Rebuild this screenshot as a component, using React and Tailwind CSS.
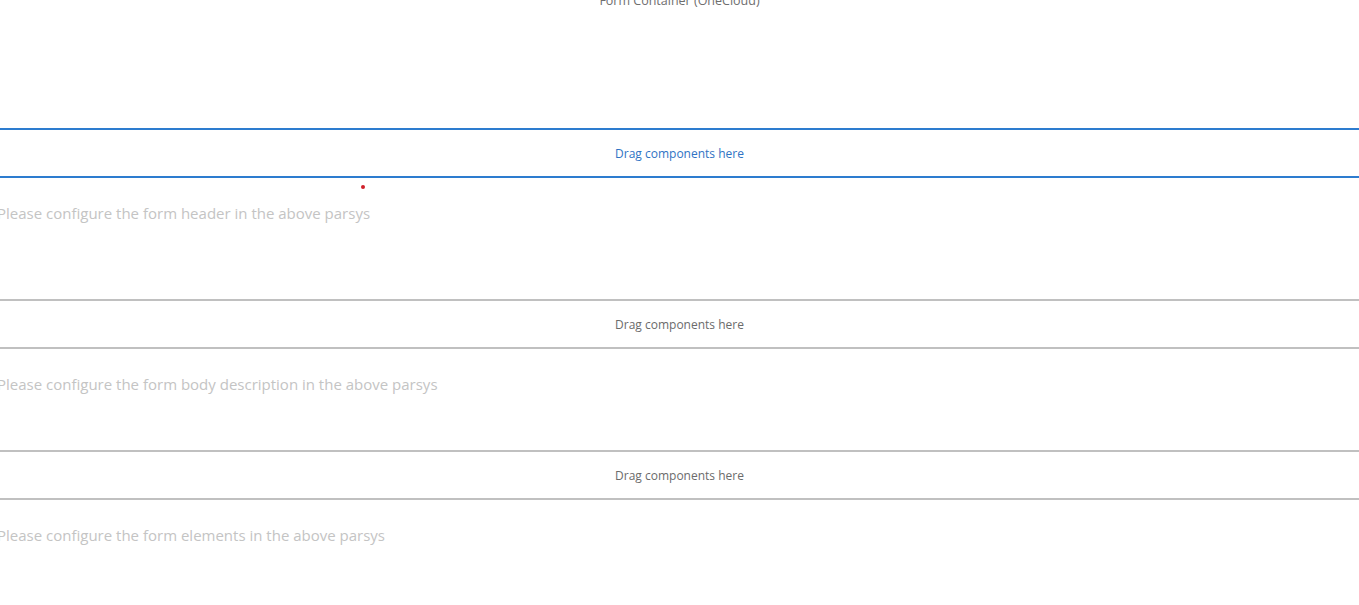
import React from 'react';

const font = { fontFamily: '"Open Sans", "Noto Sans", sans-serif' };

const DropZone = ({ active }) => (
  <div
    className={`h-[50px] border-y-2 flex items-center justify-center pt-[2px] text-[12px] ${
      active ? 'border-[#2d7ccf] text-[#2f73c4]' : 'border-[#c0c0c0] text-[#6b6b6b]'
    }`}
  >
    Drag components here
  </div>
);

const Placeholder = ({ text, height, children }) => (
  <div className={`relative ${height} pt-[25px]`}>
    {children}
    <p className="-ml-[3px] text-[15px] leading-[20px] text-[#c4c4c4]">{text}</p>
  </div>
);

export default function App() {
  return (
    <div className="w-full h-[605px] overflow-hidden bg-white" style={font}>
      {/* container title, scrolled partly off the top */}
      <div className="h-[128px] flow-root">
        <p className="-mt-[8px] text-center text-[12.5px] leading-[18px] text-[#6e6e6e]">
          Form Container (OneCloud)
        </p>
      </div>

      <DropZone active />
      <Placeholder text="Please configure the form header in the above parsys" height="h-[121px]">
        <span className="absolute left-[361px] top-[7px] w-[4px] h-[4px] rounded-full bg-[#d0202a]" />
      </Placeholder>

      <DropZone />
      <Placeholder text="Please configure the form body description in the above parsys" height="h-[101px]" />

      <DropZone />
      <Placeholder text="Please configure the form elements in the above parsys" height="h-[105px]" />
    </div>
  );
}
